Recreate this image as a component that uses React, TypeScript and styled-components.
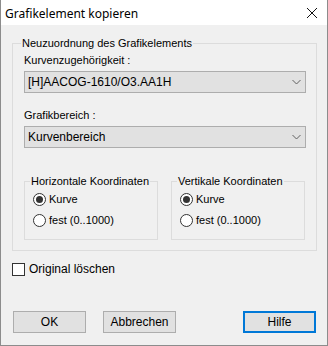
import styled, { createGlobalStyle } from "styled-components";

const GlobalStyle = createGlobalStyle`
  html, body {
    margin: 0;
    padding: 0;
    background: #f0f0f0;
  }
  * {
    box-sizing: border-box;
  }
`;

interface Option {
  label: string;
  checked?: boolean;
}

const coordGroups: { title: string; options: Option[] }[] = [
  {
    title: "Horizontale Koordinaten",
    options: [{ label: "Kurve", checked: true }, { label: "fest (0..1000)" }],
  },
  {
    title: "Vertikale Koordinaten",
    options: [{ label: "Kurve", checked: true }, { label: "fest (0..1000)" }],
  },
];

export default function App() {
  return (
    <>
      <GlobalStyle />
      <Window>
        <TitleBar>
          <Title>Grafikelement kopieren</Title>
          <CloseIcon width="12" height="12" viewBox="0 0 12 12">
            <path d="M1 1 L11 11 M11 1 L1 11" stroke="#111" strokeWidth="1" />
          </CloseIcon>
        </TitleBar>
        <Body>
          <MainGroup>
            <Legend>Neuzuordnung des Grafikelements</Legend>
            <FieldLabel>Kurvenzugehörigkeit :</FieldLabel>
            <Select>
              <span>[H]AACOG-1610/O3.AA1H</span>
              <Chevron />
            </Select>
            <FieldLabel $gap>Grafikbereich :</FieldLabel>
            <Select>
              <span>Kurvenbereich</span>
              <Chevron />
            </Select>
            <CoordRow>
              {coordGroups.map((group) => (
                <CoordGroup key={group.title}>
                  <Legend>{group.title}</Legend>
                  {group.options.map((opt) => (
                    <RadioRow key={opt.label}>
                      <Radio $checked={!!opt.checked} />
                      <span>{opt.label}</span>
                    </RadioRow>
                  ))}
                </CoordGroup>
              ))}
            </CoordRow>
          </MainGroup>
          <CheckRow>
            <CheckBox />
            <span>Original löschen</span>
          </CheckRow>
          <ButtonRow>
            <Button>OK</Button>
            <Button>Abbrechen</Button>
            <Spacer />
            <Button $default>Hilfe</Button>
          </ButtonRow>
        </Body>
      </Window>
    </>
  );
}

function Chevron() {
  return (
    <ChevronSvg width="9" height="6" viewBox="0 0 9 6">
      <path d="M0.5 1 L4.5 5 L8.5 1" fill="none" stroke="#606060" strokeWidth="1" />
    </ChevronSvg>
  );
}

const Window = styled.div`
  width: 328px;
  height: 346px;
  background: #f0f0f0;
  border: 1px solid #8c8c8c;
  border-top: none;
  display: flex;
  flex-direction: column;
  font-family: "Liberation Sans", Arial, sans-serif;
  font-size: 11px;
  color: #000;
`;

const TitleBar = styled.div`
  height: 25px;
  background: #fff;
  display: flex;
  align-items: center;
  justify-content: space-between;
  padding: 0 9px 0 4px;
`;

const Title = styled.div`
  font-family: "Noto Sans", "Open Sans", sans-serif;
  font-size: 12px;
  color: #000;
  padding-top: 1px;
`;

const CloseIcon = styled.svg`
  display: block;
  margin-top: 1px;
`;

const Body = styled.div`
  flex: 1;
  padding: 12px 11px 0 11px;
  display: flex;
  flex-direction: column;
`;

const MainGroup = styled.fieldset`
  margin: 0;
  width: 305px;
  height: 214px;
  border: 1px solid #dcdcdc;
  padding: 2px 10px 0 11px;
  display: flex;
  flex-direction: column;
`;

const Legend = styled.legend`
  padding: 0 1px;
  margin-left: -3px;
  line-height: 13px;
`;

const FieldLabel = styled.div<{ $gap?: boolean }>`
  line-height: 13px;
  margin-top: ${(p) => (p.$gap ? "16px" : "2px")};
  margin-bottom: 4px;
`;

const Select = styled.div`
  height: 22px;
  border: 1px solid #adadad;
  background: #e1e1e1;
  display: flex;
  align-items: center;
  justify-content: space-between;
  padding: 0 4px 0 3px;
  font-size: 12px;
`;

const ChevronSvg = styled.svg`
  display: block;
`;

const CoordRow = styled.div`
  display: flex;
  gap: 13px;
  margin-top: 27px;
`;

const CoordGroup = styled.fieldset`
  margin: 0;
  width: 134px;
  height: 65px;
  border: 1px solid #dcdcdc;
  padding: 5px 0 0 8px;
  display: flex;
  flex-direction: column;
  gap: 8px;
`;

const RadioRow = styled.div`
  display: flex;
  align-items: center;
  gap: 3px;
  height: 13px;
  line-height: 13px;
`;

const Radio = styled.span<{ $checked: boolean }>`
  width: 13px;
  height: 13px;
  border-radius: 50%;
  border: 1px solid #333;
  background: #fff;
  display: flex;
  align-items: center;
  justify-content: center;
  &::after {
    content: "";
    width: 7px;
    height: 7px;
    border-radius: 50%;
    background: ${(p) => (p.$checked ? "#333" : "transparent")};
  }
`;

const CheckRow = styled.div`
  display: flex;
  align-items: center;
  gap: 4px;
  margin-top: 12px;
  line-height: 13px;
  font-size: 12px;
`;

const CheckBox = styled.span`
  width: 13px;
  height: 13px;
  border: 1px solid #333;
  background: #fff;
`;

const ButtonRow = styled.div`
  display: flex;
  gap: 17px;
  margin-top: 35px;
  padding-left: 1px;
`;

const Spacer = styled.div`
  flex: 1;
`;

const Button = styled.button<{ $default?: boolean }>`
  width: 73px;
  height: 22px;
  margin: 0;
  padding: 0;
  font-family: "Liberation Sans", Arial, sans-serif;
  font-size: 12px;
  color: #000;
  background: #e1e1e1;
  border: ${(p) => (p.$default ? "2px solid #0078d7" : "1px solid #adadad")};
`;
